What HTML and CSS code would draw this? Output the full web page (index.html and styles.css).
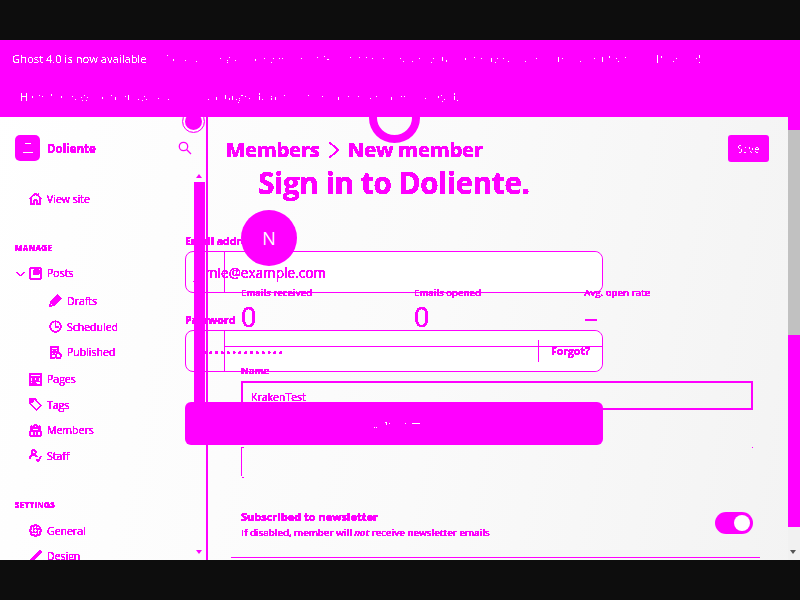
FILE: index.html
```html
<!DOCTYPE html>
<html lang="en">
<head>
	<meta charset="UTF-8">
	<meta name="viewport" content="width=device-width, initial-scale=1.0">
	<title>Doliente - New member</title>
	<link rel="stylesheet" href="styles.css">
</head>
<body>
	<!-- Filters that harden the text edges -->
	<svg class="filters" width="0" height="0" aria-hidden="true">
		<filter id="hard" x="0" y="0" width="100%" height="100%">
			<feComponentTransfer><feFuncA type="discrete" tableValues="0 1 1 1 1 1 1 1"/></feComponentTransfer>
		</filter>
		<filter id="mid" x="0" y="0" width="100%" height="100%">
			<feComponentTransfer><feFuncA type="discrete" tableValues="0 0 1 1"/></feComponentTransfer>
		</filter>
		<filter id="thin" x="0" y="0" width="100%" height="100%">
			<feComponentTransfer><feFuncA type="discrete" tableValues="0 0 0 0 0 0 0 1"/></feComponentTransfer>
		</filter>
	</svg>

	<div class="frame">
		<div class="screen">
			<!-- Update banner -->
			<div class="banner">
				<p class="banner-line"><b class="banner-title">Ghost 4.0 is now available</b> <span class="banner-text">- You are using an old version of Ghost, which means you don't have access to the latest features. Read on!</span></p>
				<p class="banner-line banner-second"><span class="banner-text">Hints for new content available - please upgrade before the theme has been changed.</span></p>
			</div>

			<div class="body-row">
				<!-- Sidebar -->
				<aside class="sidebar">
					<div class="brand">
						<div class="logo"><span class="logo-mark"></span><span class="logo-mark logo-mark-low"></span></div>
						<span class="brand-name hard">Doliente</span>
						<svg class="search-icon" viewBox="0 0 14 14"><circle cx="5.5" cy="5.5" r="4.2"/><path d="M8.8 8.8 13 13"/></svg>
					</div>

					<nav class="nav hard">
						<a class="nav-item"><svg class="icon" viewBox="0 0 14 14"><path d="M1 7 7 1.5 13 7M2.500 6v7h3V9h3v4h3V6M10 2v2"/></svg>View site</a>

						<h4 class="nav-heading">Manage</h4>
						<a class="nav-item nav-parent">
							<svg class="chevron" viewBox="0 0 10 6"><path d="M1 1 5 5 9 1"/></svg>
							<svg class="icon" viewBox="0 0 14 14"><path d="M1.500 1.500h11v11h-11zM1.500 1v12"/><path class="fill" d="M5 3h6v5H5z"/></svg>Posts
						</a>
						<div class="sub-list">
							<a class="nav-item"><svg class="icon" viewBox="0 0 14 14"><path d="M1 13 2 9 9.500 1.500 12.500 4.500 5 12zM3 8l3 3"/><path class="fill" d="M2 9 9.500 1.500 12.500 4.500 5 12z"/></svg>Drafts</a>
							<a class="nav-item"><svg class="icon" viewBox="0 0 14 14"><circle cx="7" cy="7" r="5.700"/><path d="M7 3v4.500h3.500"/></svg>Scheduled</a>
							<a class="nav-item"><svg class="icon" viewBox="0 0 14 14"><path d="M6 13H2V1h8v5M4 4h4M4 6.500h4M4 9h2"/><circle cx="10" cy="10.500" r="2.800"/></svg>Published</a>
						</div>
						<a class="nav-item"><svg class="icon" viewBox="0 0 14 14"><path d="M1 1h12v12H1zM1 4h12M3 6.500h3M8 6.500h3M3 9h8M3 11h5"/></svg>Pages</a>
						<a class="nav-item"><svg class="icon" viewBox="0 0 14 14"><path d="M1 1h5l7 7-5 5-7-7z"/><circle cx="3.500" cy="3.500" r=".8"/></svg>Tags</a>
						<a class="nav-item"><svg class="icon" viewBox="0 0 14 14"><circle cx="3" cy="4" r="1.500"/><circle cx="7" cy="3" r="1.800"/><circle cx="11" cy="4" r="1.500"/><path d="M1 12V8l2-1 2 1M5 12V8l2-1 2 1v4M9 8l2-1 2 1v4M1 12.500h12"/></svg>Members</a>
						<a class="nav-item"><svg class="icon" viewBox="0 0 14 14"><circle cx="5" cy="3.500" r="2.300"/><path d="M1 10c0-2 2-3.500 4-3.500s3 .8 4 2M8 11l2 2 3-5"/></svg>Staff</a>

						<h4 class="nav-heading nav-heading-settings">Settings</h4>
						<a class="nav-item"><svg class="icon" viewBox="0 0 14 14"><circle cx="7" cy="7" r="2.200"/><path d="M6 1h2l.5 1.800 1.700-.8 1.500 1.500-.8 1.700L13 6v2l-1.600.5.800 1.700-1.500 1.500-1.700-.8L8 13H6l-.5-1.600-1.700.8-1.500-1.500.8-1.700L1 8V6l1.600-.5-.8-1.700 1.500-1.500 1.700.8z"/></svg>General</a>
						<a class="nav-item"><svg class="icon" viewBox="0 0 14 14"><path d="M1 13c0-2 1-3 2.500-3.500L12 1l1 1-8.500 8.500C4 12 3 13 1 13z"/></svg>Design</a>
					</nav>

					<div class="side-scroll">
						<span class="arrow-up"></span>
						<span class="side-thumb"></span>
						<span class="arrow-down"></span>
					</div>
				</aside>

				<!-- Member form -->
				<main class="main">
					<header class="page-head">
						<h1 class="crumbs hard">Members <svg class="crumb-sep" viewBox="0 0 12 18"><path d="M1.500 1.500 10.500 9 1.500 16.500"/></svg> New member</h1>
						<button class="save-btn"><span class="thin">Save</span></button>
					</header>

					<div class="member">
						<div class="avatar"><span class="avatar-letter">N</span></div>

						<div class="stats">
							<div class="stat"><div class="stat-label hard">Emails received</div><div class="stat-value hard">0</div></div>
							<div class="stat"><div class="stat-label hard">Emails opened</div><div class="stat-value hard">0</div></div>
							<div class="stat"><div class="stat-label hard">Avg. open rate</div><div class="stat-value hard">&ndash;</div></div>
						</div>

						<label class="field-label hard">Name</label>
						<div class="name-field"><span class="hard">KrakenTest</span></div>
						<div class="email-field"></div>

						<div class="toggle-row">
							<div class="hard">
								<div class="toggle-title">Subscribed to newsletter</div>
								<div class="toggle-hint">If disabled, member will <em>not</em> receive newsletter emails</div>
							</div>
							<div class="toggle"><span class="toggle-knob"></span></div>
						</div>
					</div>
					<hr class="rule">
				</main>

				<div class="page-scroll">
					<span class="page-thumb-top"></span>
					<span class="page-track"></span>
					<span class="page-thumb"></span>
					<span class="arrow-down arrow-grey"></span>
				</div>
			</div>

			<!-- Sign in window lying over the page -->
			<span class="spinner"></span>
			<span class="ring"></span>
			<section class="signin">
				<h2 class="signin-title hard">Sign in to Doliente.</h2>
				<label class="signin-label hard">Email address</label>
				<div class="signin-input">
					<span class="signin-inner"></span>
					<span class="signin-value hard">jamie@example.com</span>
				</div>
				<label class="signin-label signin-label-pw hard">Password</label>
				<div class="signin-input">
					<span class="signin-inner signin-inner-pw"></span>
					<span class="signin-value signin-dots hard">&bull;&bull;&bull;&bull;&bull;&bull;&bull;&bull;&bull;&bull;&bull;&bull;&bull;&bull;&bull;</span>
					<a class="forgot"><span class="hard">Forgot?</span></a>
				</div>
				<button class="signin-btn"><span class="thin">Sign in</span><span class="signin-arrow"></span></button>
			</section>
		</div>
	</div>
</body>
</html>
```

FILE: styles.css
```css
* {
	box-sizing: border-box;
}

body {
	margin: 0;
	background-color: #0d0d0d;
	font-family: "Open Sans", "Noto Sans", sans-serif;
	color: #f0f;
}

.filters {
	position: absolute;
}

.hard {
	filter: url(#hard);
}

.mid {
	filter: url(#mid);
}

.thin {
	filter: url(#thin);
}

.frame {
	height: 600px;
	padding: 40px 0;
	overflow: hidden;
}

.screen {
	position: relative;
	height: 520px;
	overflow: hidden;
	display: flex;
	flex-direction: column;
	background: linear-gradient(100deg, #fff 0%, #fafafa 55%, #f3f3f3 100%);
}

/* banner */

.banner {
	position: relative;
	z-index: 10;
	height: 77px;
	flex: none;
	background-color: #f0f;
	color: #fff;
	font-size: 11px;
	padding: 11px 12px 0;
}

.banner-line {
	margin: 0;
	height: 16px;
	line-height: 16px;
	white-space: nowrap;
}

.banner-second {
	margin-top: 22px;
	padding-left: 8px;
}

.banner-title {
	display: inline-block;
	font-size: 11.2px;
	font-weight: 400;
	margin-right: 6px;
	filter: url(#mid);
}

.banner-text {
	display: inline-block;
	filter: url(#thin);
}

.body-row {
	flex: 1;
	display: flex;
	min-height: 0;
}

/* sidebar */

.sidebar {
	position: relative;
	width: 208px;
	flex: none;
	border-right: 2px solid #f0f;
	padding: 18px 0 0 15px;
	overflow: hidden;
}

.brand {
	display: flex;
	align-items: center;
	height: 26px;
	padding-right: 14px;
}

.logo {
	width: 25px;
	height: 26px;
	border-radius: 5px;
	background-color: #f0f;
	display: flex;
	flex-direction: column;
	align-items: center;
	justify-content: center;
	gap: 8px;
}

.logo-mark {
	width: 6px;
	height: 1px;
	background-color: #fff;
}

.logo-mark-low {
	width: 10px;
}

.brand-name {
	margin-left: 7px;
	font-size: 11.5px;
	font-weight: 700;
}

.search-icon {
	margin-left: auto;
	width: 14px;
	height: 14px;
	fill: none;
	stroke: #f0f;
	stroke-width: 1.3;
}

.nav {
	margin-top: 25px;
	width: 176px;
	font-size: 10.5px;
	font-weight: 500;
}

.nav-item {
	display: flex;
	align-items: center;
	height: 25.6px;
	padding-left: 14px;
	white-space: nowrap;
	position: relative;
}

.icon {
	width: 13px;
	height: 13px;
	margin-right: 5px;
	flex: none;
	fill: none;
	stroke: #f0f;
	stroke-width: 1.2;
}

.icon .fill {
	fill: #f0f;
	stroke: none;
}

.chevron {
	position: absolute;
	left: 1px;
	top: 10px;
	width: 9px;
	height: 6px;
	fill: none;
	stroke: #f0f;
	stroke-width: 1.1;
}

.sub-list {
	margin: 2px 0 1.4px;
	padding-left: 20px;
}

.nav-heading {
	margin: 30px 0 7px;
	height: 12px;
	line-height: 12px;
	font-size: 8px;
	font-weight: 700;
	text-transform: uppercase;
	letter-spacing: 0.3px;
}

.side-scroll {
	position: absolute;
	z-index: 3;
	top: 0;
	bottom: 0;
	left: 194px;
	width: 12px;
}

.side-thumb {
	position: absolute;
	left: 0;
	top: 65px;
	width: 11px;
	height: 250px;
	background-color: #f0f;
}

.arrow-up,
.arrow-down {
	position: absolute;
	left: 2px;
	width: 0;
	height: 0;
	border-left: 3.5px solid transparent;
	border-right: 3.5px solid transparent;
}

.arrow-up {
	top: 57px;
	border-bottom: 4px solid #f0f;
}

.arrow-down {
	top: 433px;
	border-top: 4px solid #f0f;
}

.arrow-grey {
	left: 2px;
	border-top-color: #555;
}

/* main */

.main {
	flex: 1;
	padding-top: 18px;
	min-width: 0;
}

.page-head {
	display: flex;
	align-items: center;
	justify-content: space-between;
	height: 27px;
	padding: 0 19px 0 18px;
}

.crumbs {
	margin: 0;
	font-size: 20.3px;
	font-weight: 700;
	white-space: nowrap;
	letter-spacing: -0.2px;
}

.crumb-sep {
	width: 12px;
	height: 18px;
	margin: 0 3px;
	fill: none;
	stroke: #f0f;
	stroke-width: 1.2;
	vertical-align: -2px;
}

.save-btn {
	width: 41px;
	height: 27px;
	padding: 0;
	border: none;
	border-radius: 3px;
	background-color: #f0f;
	color: #fff;
	font-family: inherit;
	font-size: 10px;
	font-weight: 600;
}

.save-btn span {
	display: inline-block;
}

.member {
	padding: 48px 35px 0 33px;
}

.avatar {
	position: relative;
	z-index: 3;
	width: 56px;
	height: 56px;
	border-radius: 50%;
	background-color: #f0f;
	color: #fff;
	display: flex;
	align-items: center;
	justify-content: center;
	font-size: 18px;
}

.stats {
	display: grid;
	grid-template-columns: 173px 170px 1fr;
	margin-top: 21px;
}

.stat-label {
	position: relative;
	z-index: 3;
	height: 12px;
	line-height: 12px;
	font-size: 9.500px;
	font-weight: 600;
	width: max-content;
}

.stat-value {
	position: relative;
	z-index: 3;
	margin-top: 4px;
	height: 28px;
	line-height: 28px;
	font-size: 27px;
	font-weight: 400;
	width: max-content;
}

.field-label {
	position: relative;
	z-index: 3;
	display: block;
	width: max-content;
	margin-top: 34px;
	height: 12px;
	line-height: 12px;
	font-size: 9.500px;
	font-weight: 700;
}

.name-field {
	margin-top: 4px;
	height: 29px;
	border: 2px solid #f0f;
	padding: 0 8px;
	line-height: 28px;
	font-size: 10.500px;
	font-weight: 500;
}

.name-field span {
	display: inline-block;
}

.email-field {
	position: relative;
	margin-top: 37px;
	height: 29px;
	border-left: 1px solid #f0f;
}

.email-field::before {
	content: "";
	position: absolute;
	left: 0;
	top: 0;
	width: 2px;
	height: 29px;
	border-top: 1px solid #f0f;
	border-bottom: 1px solid #f0f;
}

.email-field::after {
	content: "";
	position: absolute;
	right: 0;
	top: 0;
	width: 1px;
	height: 1px;
	background-color: #f0f;
}

.toggle-row {
	display: flex;
	align-items: flex-start;
	justify-content: space-between;
	margin-top: 33px;
}

.toggle-title {
	height: 16px;
	line-height: 16px;
	font-size: 11px;
	font-weight: 700;
}

.toggle-hint {
	height: 16px;
	line-height: 16px;
	font-size: 9.600px;
	font-weight: 600;
}

.toggle {
	display: flex;
	align-items: center;
	justify-content: flex-end;
	width: 38px;
	height: 22px;
	margin-top: 3px;
	padding-right: 3px;
	border-radius: 11px;
	background-color: #f0f;
}

.toggle-knob {
	width: 16px;
	height: 16px;
	border-radius: 50%;
	background-color: #fff;
}

.rule {
	margin: 16px 28px 0 23px;
	border: none;
	border-top: 1px solid #f0f;
}

.page-scroll {
	position: relative;
	width: 12px;
	flex: none;
	display: flex;
	flex-direction: column;
	background-color: #f1f1f1;
}

.page-thumb-top {
	height: 13px;
	background-color: #f0f;
}

.page-track {
	height: 205px;
	background-color: #c1c1c1;
}

.page-thumb {
	height: 192px;
	background-color: #f0f;
}

/* sign in window */

.spinner {
	position: absolute;
	left: 182px;
	top: 70px;
	width: 23px;
	height: 23px;
	border-radius: 50%;
	border: 1px solid #f0f;
	box-shadow: inset 0 0 0 2px #fff, inset 0 0 0 12px #f0f;
}

.ring {
	position: absolute;
	left: 369px;
	top: 53px;
	width: 51px;
	height: 50px;
	border-radius: 50%;
	border: 8px solid #f0f;
}

.signin {
	position: absolute;
	left: 185px;
	top: 124px;
	width: 418px;
}

.signin-title {
	margin: 0;
	height: 38px;
	line-height: 38px;
	text-align: center;
	font-size: 29.5px;
	font-weight: 700;
	letter-spacing: -0.3px;
}

.signin-label {
	display: block;
	margin-top: 31px;
	height: 16px;
	line-height: 16px;
	font-size: 10.500px;
	font-weight: 700;
	width: max-content;
}

.signin-label-pw {
	margin-top: 19px;
}

.signin-input {
	position: relative;
	height: 42px;
	margin-top: 2px;
	border: 1px solid #f0f;
	border-radius: 8px;
	display: flex;
	align-items: center;
	font-size: 13.6px;
}

.signin-inner {
	position: absolute;
	left: 38px;
	right: 0;
	top: 0;
	bottom: 0;
	background-color: #fff;
	border-left: 1px solid #f0f;
	border-radius: 0 8px 8px 0;
}

.signin-inner-pw {
	background: linear-gradient(#f0f, #f0f) 0 15px / 100% 1px no-repeat, #fff;
}

.signin-value {
	position: relative;
	padding-left: 8px;
	white-space: nowrap;
}

.signin-dots {
	padding-left: 11px;
	padding-top: 2px;
	font-size: 11px;
	letter-spacing: 1.7px;
}

.forgot {
	position: absolute;
	right: 0;
	top: 9px;
	width: 64px;
	height: 22px;
	line-height: 22px;
	border-left: 1px solid #f0f;
	padding-left: 12px;
	font-size: 10.500px;
	font-weight: 700;
}

.forgot span {
	display: inline-block;
}

.signin-btn {
	position: relative;
	z-index: 5;
	display: flex;
	align-items: center;
	justify-content: flex-end;
	gap: 5px;
	width: 100%;
	height: 43px;
	margin-top: 30px;
	padding: 0 183px 0 0;
	border: none;
	border-radius: 6px;
	background-color: #f0f;
	color: #fff;
	font-family: inherit;
	font-size: 11px;
}

.signin-arrow {
	width: 8px;
	height: 1px;
	background-color: #fff;
}
```
